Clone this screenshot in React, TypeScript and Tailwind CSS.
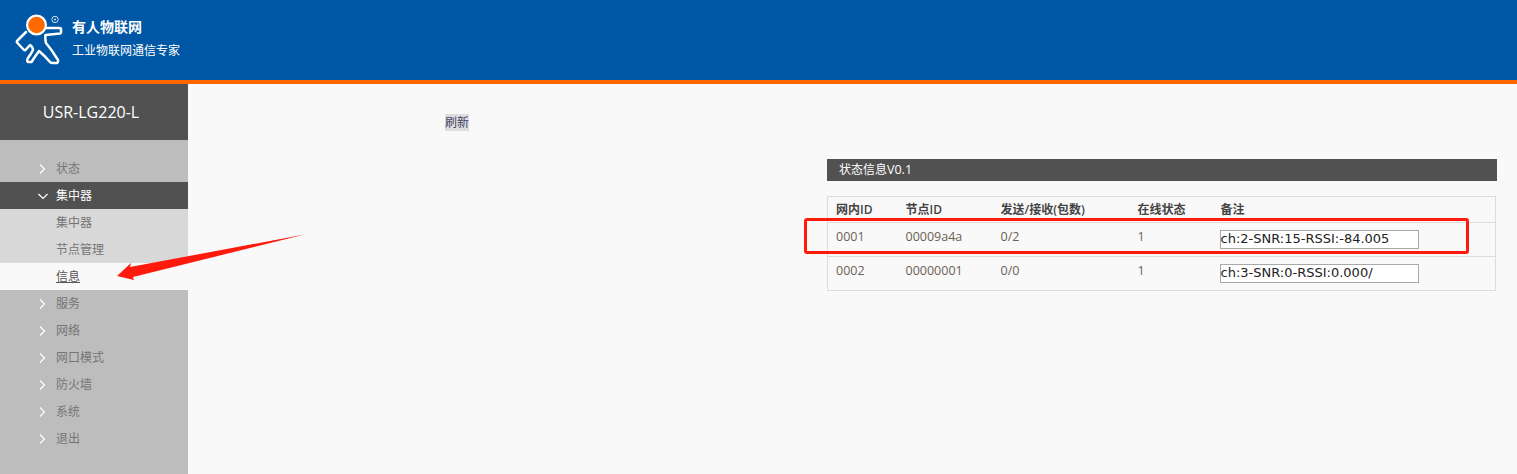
import React from "react";

function Chevron({ open }: { open?: boolean }) {
  return (
    <svg width="10" height="10" viewBox="0 0 10 10" className="shrink-0" fill="none" stroke="#ffffff" strokeWidth="1.2">
      {open ? <path d="M0.5 3 L5 7.5 L9.5 3" /> : <path d="M2 0.5 L6.5 5 L2 9.5" />}
    </svg>
  );
}

function Logo() {
  return (
    <svg width="62" height="52" viewBox="15 14 62 52" className="shrink-0" fill="none">
      <path
        d="M26 32 L17 41 Q16.5 42 17.5 43 L24 50 Q25 50.5 26 49.5 L30 45 Q33 47 33 50 Q31 54 28 58 Q26.5 61 28 62 L31.5 62 Q34 58 39 51 Q45 56 50 62 Q51 63 53 63 L57 63 Q58.5 62 58 60 Q52 50 46 43 Q45 39 45.5 35 L60 33.5 Q61.5 33 61 31 L61 29 Q61 28 59 28 L43 28"
        stroke="#ffffff"
        strokeWidth="2.5"
        strokeLinejoin="round"
        strokeLinecap="round"
      />
      <circle cx="36.5" cy="25" r="9.4" fill="#ff6a00" stroke="#ffffff" strokeWidth="2.2" />
      <circle cx="55" cy="19.5" r="3.2" stroke="#cfe0f0" strokeWidth="1" />
      <circle cx="55" cy="19.5" r="1" fill="#cfe0f0" />
    </svg>
  );
}

const before = ["状态"];
const after = ["服务", "网络", "网口模式", "防火墙", "系统", "退出"];

function NavClosed({ label }: { label: string }) {
  return (
    <div className="flex h-[27px] items-center gap-[8px] pl-[38px] text-[12px] text-[#757575]">
      <Chevron />
      <span>{label}</span>
    </div>
  );
}

export default function App() {
  return (
    <div className="relative flex h-[474px] w-[1517px] flex-col overflow-hidden bg-[#f9f9f9] font-['Open_Sans','Noto_Sans_CJK_SC',sans-serif] text-[12px]">
      <header className="flex h-[84px] shrink-0 items-start border-b-[4px] border-[#ff6600] bg-[#0057a5] pl-[15px] pt-[14px] text-white">
        <Logo />
        <div className="ml-[-5px] flex flex-col">
          <span className="mt-[3px] text-[14px] font-bold leading-[20px]">有人物联网</span>
          <span className="mt-[5px] text-[12px] leading-[18px]">工业物联网通信专家</span>
        </div>
      </header>
      <div className="flex min-h-0 flex-1">
        <aside className="flex w-[188px] shrink-0 flex-col bg-[#bdbdbd]">
          <div className="flex h-[56px] items-center justify-center bg-[#515151] pr-[6px] text-[16px] text-white">USR-LG220-L</div>
          <nav className="mt-[15px] flex flex-col">
            {before.map((l) => (
              <NavClosed key={l} label={l} />
            ))}
            <div className="flex h-[27px] items-center gap-[8px] bg-[#515151] pl-[38px] text-[12px] text-white">
              <Chevron open />
              <span>集中器</span>
            </div>
            <div className="flex h-[27px] items-center bg-[#d8d8d8] pl-[56px] text-[#757575]">集中器</div>
            <div className="flex h-[27px] items-center bg-[#d8d8d8] pl-[56px] text-[#757575]">节点管理</div>
            <div className="flex h-[27px] items-center bg-[#f9f9f9] pl-[56px] text-[#555555] underline">信息</div>
            {after.map((l) => (
              <NavClosed key={l} label={l} />
            ))}
          </nav>
        </aside>
        <main className="min-w-0 flex-1">
          <div className="pl-[257px] pt-[30px] leading-[17px]">
            <span className="bg-[#dddddd] text-[#444466]">刷新</span>
          </div>
          <section className="ml-[639px] mr-[20px] mt-[28px]">
            <div className="flex h-[22px] items-center bg-[#515151] pl-[12px] text-white">
              状态信息<span className="text-[12.5px]">V0.1</span>
            </div>
            <table className="mt-[15px] w-[669px] table-fixed border-collapse border border-[#dddddd] text-[12.5px] text-[#6b5f55]">
              <thead>
                <tr className="h-[26px] text-left text-[12px] text-[#444444]">
                  <th className="w-[70px] pl-[8px] font-semibold">网内ID</th>
                  <th className="w-[95px] pl-[8px] font-semibold">节点ID</th>
                  <th className="w-[137px] pl-[8px] font-semibold">发送/接收(包数)</th>
                  <th className="w-[82px] pl-[8px] font-semibold">在线状态</th>
                  <th className="pl-[9px] font-semibold">备注</th>
                </tr>
              </thead>
              <tbody>
                {[
                  ["0001", "00009a4a", "0/2", "1", "ch:2-SNR:15-RSSI:-84.005"],
                  ["0002", "00000001", "0/0", "1", "ch:3-SNR:0-RSSI:0.000/"],
                ].map((r) => (
                  <tr key={r[0]} className="h-[34px] border-t border-[#dddddd]">
                    <td className="pb-[5px] pl-[8px]">{r[0]}</td>
                    <td className="pb-[5px] pl-[8px]">{r[1]}</td>
                    <td className="pb-[5px] pl-[8px]">{r[2]}</td>
                    <td className="pb-[5px] pl-[8px]">{r[3]}</td>
                    <td className="pl-[8px]">
                      <input
                        readOnly
                        value={r[4]}
                        className="mb-[1px] block h-[19px] w-[199px] border border-[#a9a9a9] bg-white pl-0 font-['DejaVu_Sans',sans-serif] text-[13px] text-[#222222] outline-none"
                      />
                    </td>
                  </tr>
                ))}
              </tbody>
            </table>
          </section>
        </main>
      </div>
      {/* annotations drawn over the screenshot */}
      <div className="absolute left-[804px] top-[218px] h-[36px] w-[665px] rounded-[3px] border-[3px] border-[#ff1a0e]" />
      <svg className="absolute left-0 top-0" width="320" height="300" fill="none">
        <path d="M304.5 234.5 L130 267 L131 263 L117 276 L134 280 L133 277 Z" fill="#ff1a0e" />
      </svg>
    </div>
  );
}
